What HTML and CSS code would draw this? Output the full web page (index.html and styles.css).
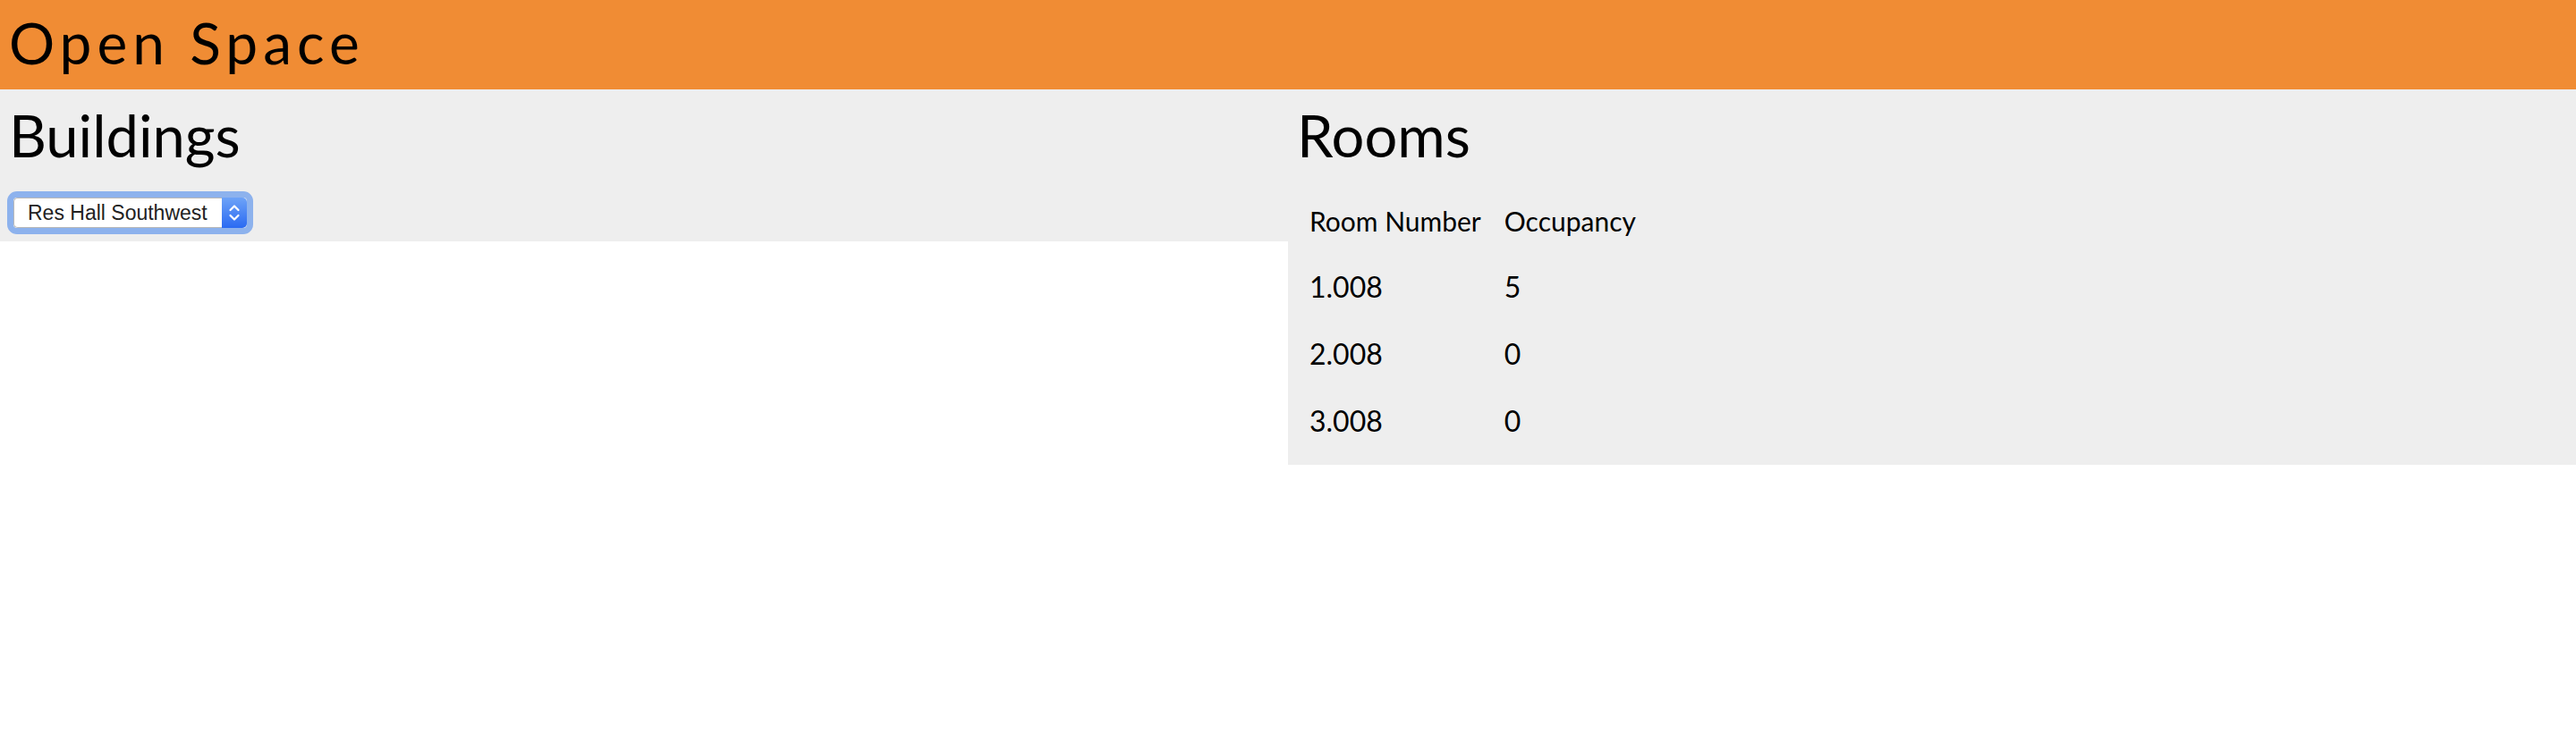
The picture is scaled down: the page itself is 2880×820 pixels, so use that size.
FILE: index.html
```html
<!DOCTYPE html>
<html lang="en">
<head>
  <meta charset="UTF-8" />
  <title>Open Space</title>
  <link rel="stylesheet" href="styles.css">
</head>
<body>

<header>
  <span class="brand">Open Space</span>
</header>

<div class="columns">
  <section class="panel">
    <h1>Buildings</h1>
    <div class="picker">
      <select id="building">
        <option>Res Hall Southwest</option>
        <option>Res Hall Northeast</option>
        <option>Library</option>
      </select>
      <span class="arrows">
        <svg width="14" height="22" viewBox="0 0 14 22">
          <path d="M2.5 8 L7 3.5 L11.5 8" fill="none" stroke="#fff" stroke-width="2.2" stroke-linecap="round" stroke-linejoin="round"/>
          <path d="M2.5 14 L7 18.5 L11.5 14" fill="none" stroke="#fff" stroke-width="2.2" stroke-linecap="round" stroke-linejoin="round"/>
        </svg>
      </span>
    </div>
  </section>

  <section class="panel rooms-panel">
    <h1>Rooms</h1>
    <table class="rooms">
      <thead>
        <tr><th>Room Number</th><th>Occupancy</th></tr>
      </thead>
      <tbody>
        <tr><td>1.008</td><td>5</td></tr>
        <tr><td>2.008</td><td>0</td></tr>
        <tr><td>3.008</td><td>0</td></tr>
      </tbody>
    </table>
  </section>
</div>

</body>
</html>
```

FILE: styles.css
```css
body {
  font-family: Lato, 'Noto Sans', sans-serif;
  background: #fff;
  color: #000;
  margin: 0;
  padding: 0;
}

header {
  background: #f08c34;
  height: 100px;
  padding: 0 10px;
  box-sizing: border-box;
}

.brand {
  font-size: 64px;
  line-height: 95px;
  letter-spacing: 6px;
}

.columns {
  display: flex;
  align-items: flex-start;
}

.panel {
  flex: 1;
  background: #eeeeee;
  padding: 13px 10px 8px;
}

.rooms-panel {
  padding-bottom: 12px;
}

.panel h1 {
  margin: 0;
  font-size: 65px;
  font-weight: normal;
  line-height: 77px;
}

.picker {
  display: inline-flex;
  margin: 24px 0 0 -2px;
  border: 7px solid #8db2ed;
  border-radius: 11px;
}

.picker select {
  appearance: none;
  -webkit-appearance: none;
  width: 233px;
  height: 34px;
  padding: 0 0 0 15px;
  border: 1px solid #b8b8b8;
  border-right: none;
  border-radius: 5px 0 0 5px;
  background: #fff;
  color: #222;
  font-family: 'Liberation Sans', Arial, sans-serif;
  font-size: 23px;
  outline: none;
}

.arrows {
  width: 28px;
  height: 34px;
  display: flex;
  align-items: center;
  justify-content: center;
  background: linear-gradient(#6ea3f7, #2a6af2);
  border-radius: 0 5px 5px 0;
}

.rooms {
  margin-top: 19px;
  border-collapse: collapse;
}

.rooms th, .rooms td {
  padding: 0 12px 0 14px;
  text-align: left;
}

.rooms th {
  font-size: 30px;
  font-weight: normal;
  padding-top: 2px;
  line-height: 72px;
}

.rooms td {
  font-size: 32px;
  line-height: 75px;
}
```
